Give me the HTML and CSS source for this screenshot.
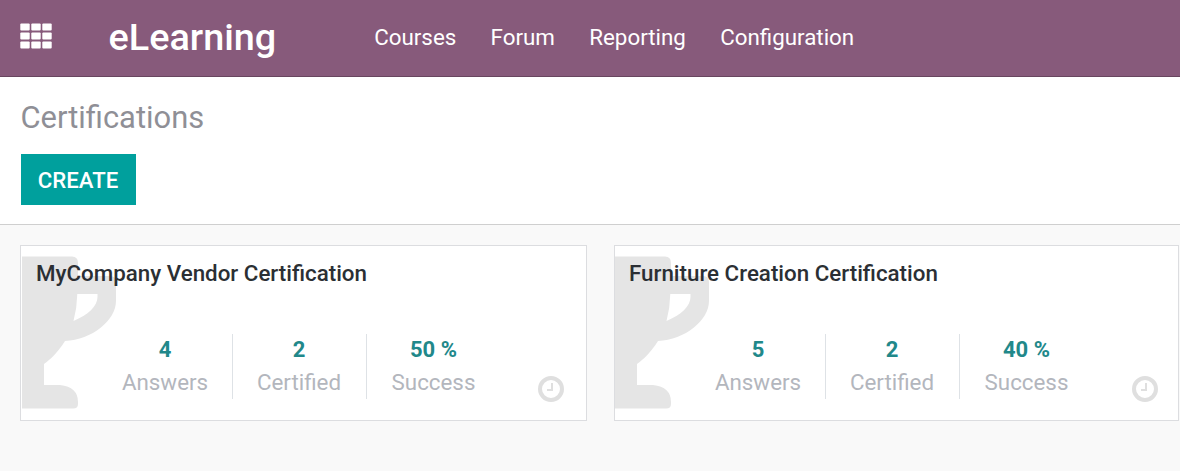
FILE: index.html
```html
<!DOCTYPE html>
<html lang="en">
<head>
<meta charset="utf-8">
<title>eLearning - Certifications</title>
<link rel="stylesheet" href="styles.css">
</head>
<body>
<svg class="sprite" aria-hidden="true">
  <symbol id="trophy" viewBox="0 0 96 153">
    <path fill-rule="evenodd" d="M0 0.500H50Q56 0.500 56 7V20H88Q94 20 94 26V45C94 64 70 84 43 85C36 96 29 103 22 108V129H38Q56 131 56 146V148Q56 152.500 51 152.500H0ZM55.300 38Q55 52 51.500 65C66 59 75.500 50 75.500 41V38Z"/>
  </symbol>
  <symbol id="clock" viewBox="0 0 28 28">
    <circle cx="14" cy="14" r="11" fill="none" stroke="currentColor" stroke-width="4"/>
    <path d="M15 8V15H10" fill="none" stroke="currentColor" stroke-width="2"/>
  </symbol>
</svg>
<header class="navbar">
  <svg class="apps" viewBox="0 0 32 26" fill="#fff">
    <rect x="0.300" y="0.500" width="9.400" height="7" rx="1"/><rect x="11.300" y="0.500" width="9.400" height="7" rx="1"/><rect x="22.300" y="0.500" width="9.400" height="7" rx="1"/>
    <rect x="0.300" y="9.500" width="9.400" height="7" rx="1"/><rect x="11.300" y="9.500" width="9.400" height="7" rx="1"/><rect x="22.300" y="9.500" width="9.400" height="7" rx="1"/>
    <rect x="0.300" y="18.500" width="9.400" height="7" rx="1"/><rect x="11.300" y="18.500" width="9.400" height="7" rx="1"/><rect x="22.300" y="18.500" width="9.400" height="7" rx="1"/>
  </svg>
  <div class="brand">eLearning</div>
  <nav class="menu"><a>Courses</a><a>Forum</a><a>Reporting</a><a>Configuration</a></nav>
</header>
<section class="control-panel">
  <h1 class="title">Certifications</h1>
  <button class="create">CREATE</button>
</section>
<main class="kanban">
  <article class="card">
    <svg class="trophy"><use href="#trophy"/></svg>
    <h2 class="name">MyCompany Vendor Certification</h2>
    <div class="stats">
      <div class="stat"><b>4</b><span>Answers</span></div>
      <div class="stat"><b>2</b><span>Certified</span></div>
      <div class="stat"><b>50 %</b><span>Success</span></div>
    </div>
    <svg class="clock"><use href="#clock"/></svg>
  </article>
  <article class="card">
    <svg class="trophy"><use href="#trophy"/></svg>
    <h2 class="name">Furniture Creation Certification</h2>
    <div class="stats">
      <div class="stat"><b>5</b><span>Answers</span></div>
      <div class="stat"><b>2</b><span>Certified</span></div>
      <div class="stat"><b>40 %</b><span>Success</span></div>
    </div>
    <svg class="clock"><use href="#clock"/></svg>
  </article>
</main>
</body>
</html>
```
FILE: styles.css
```css
* { box-sizing: border-box; }
body {
  margin: 0;
  height: 471px;
  overflow: hidden;
  background: #f9f9f9;
  font-family: Roboto, sans-serif;
  font-size: 22.35px;
}
.sprite { position: absolute; width: 0; height: 0; }
.navbar {
  display: flex;
  align-items: center;
  height: 77px;
  padding: 0 20px 2px;
  background: #875a7b;
  border-bottom: 1px solid #68465f;
  color: #fff;
}
.apps { width: 32px; height: 26px; margin-top: -3px; }
.brand { margin-left: 56.5px; width: 265.7px; font-size: 37.8px; font-weight: 500; }
.menu { display: flex; gap: 34.3px; }
.control-panel {
  height: 148px;
  padding: 24px 20px 0;
  background: #fff;
  border-bottom: 1px solid #cfcfcf;
}
.title {
  margin: 0;
  padding-left: 0.5px;
  height: 53px;
  font-size: 30.9px;
  line-height: 34px;
  font-weight: 400;
  color: #8f8f96;
}
.create {
  display: block;
  width: 115px;
  height: 51px;
  margin-left: 0.5px;
  padding: 0;
  border: 0;
  background: #00a09d;
  color: #fff;
  font: 500 22.2px Roboto, sans-serif;
}
.kanban {
  display: grid;
  grid-template-columns: 567px 565px;
  gap: 27px;
  padding: 20px 0 0 20px;
}
.card {
  position: relative;
  height: 176px;
  padding: 13px 0 0 15px;
  background: #fff;
  border: 1px solid #dcdde0;
}
.trophy {
  position: absolute;
  left: 1px;
  top: 10px;
  width: 96px;
  height: 153px;
  fill: #e5e5e5;
}
.card:last-child .trophy { left: 0; }
.card:last-child { padding-left: 14px; }
.name {
  position: relative;
  margin: 0;
  height: 75px;
  font-size: 22.35px;
  line-height: 28px;
  font-weight: 500;
  color: #2b2f34;
}
.stats { display: flex; padding-left: 62.5px; }
.stat {
  display: flex;
  flex-direction: column;
  align-items: center;
  width: 134px;
  height: 65px;
  border-right: 1px solid #dee2e6;
  line-height: 32px;
}
.stat:last-child { border-right: 0; }
.stat b { color: #21888a; font-weight: 700; font-size: 22px; }
.stat span { color: #b3b6bd; }
.clock {
  position: absolute;
  right: 21px;
  bottom: 17px;
  width: 28px;
  height: 28px;
  color: #dfdfdf;
}
.card:last-child .clock { right: 19px; }
```
